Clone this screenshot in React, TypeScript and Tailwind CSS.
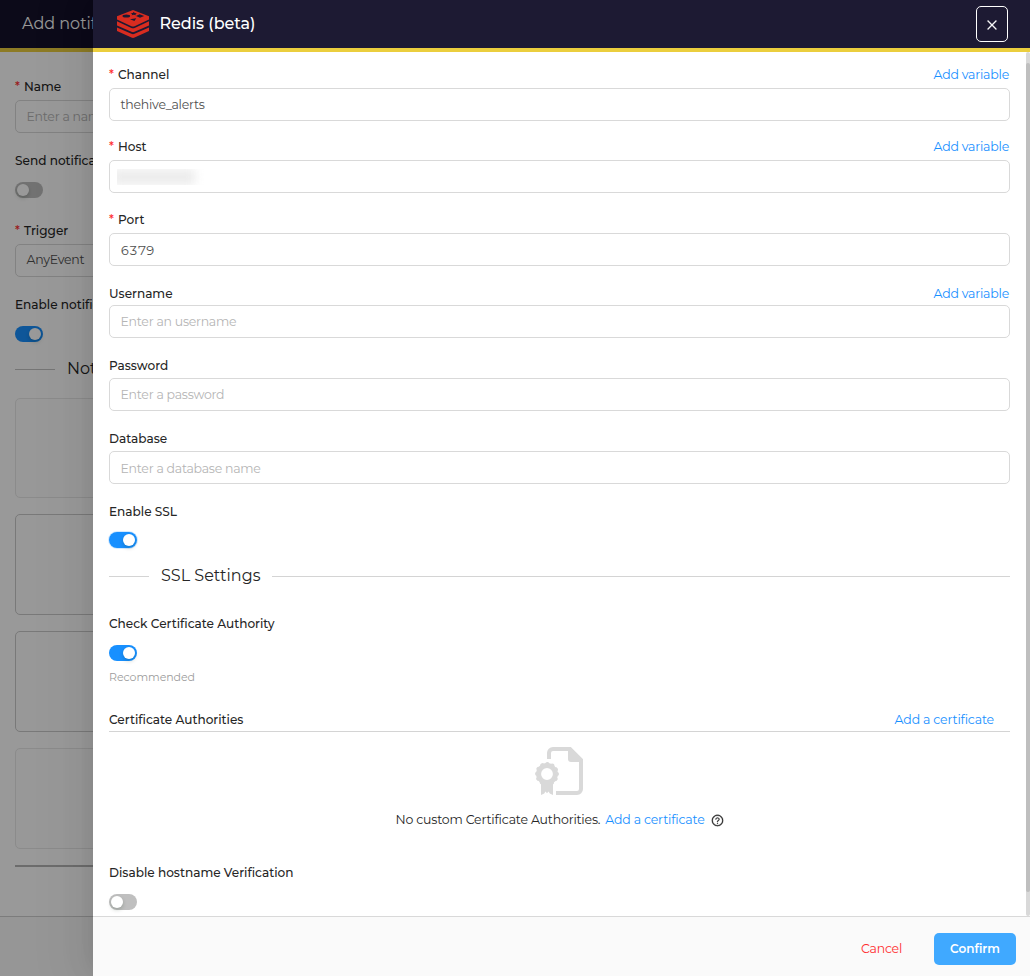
import type { ReactNode } from "react";
import { AiOutlineClose, AiOutlineQuestionCircle } from "react-icons/ai";

function RedisLogo() {
  return (
    <svg width="32" height="28" viewBox="0 0 32 28" className="shrink-0">
      <path d="M16 0 32 6.3v3.2L17.6 16.2q-1.6.8-3.2 0L0 9.5V6.3z" fill="#d82c20" />
      <path d="M0 11.3l14.4 6.6q1.6.7 3.2 0L32 11.3v4.1l-14.4 6.4q-1.6.7-3.2 0L0 15.4z" fill="#d82c20" />
      <path d="M0 17.4l14.4 6.4q1.6.7 3.2 0L32 17.4v3.7l-14.4 6.5q-1.6.7-3.2 0L0 21.1z" fill="#d82c20" />
      <ellipse cx="9.3" cy="6" rx="3.8" ry="1.5" fill="#1d1a33" />
      <path d="M16.8 1.8l.9 1.1 2.3.2-1.6.9.6 1.2-2.2-.5-2.2.6.6-1.3-1.8-.9 2.5-.2z" fill="#1d1a33" />
      <path d="M22.6 4.2l4.6 1.8-4.2 1.7-4-1.7zM13 9.2l6.3-1-1.9 2.9z" fill="#1d1a33" />
    </svg>
  );
}

function CertificateIcon() {
  return (
    <svg width="48" height="48" viewBox="0 0 48 48" fill="#d9d9d9" className="mr-px">
      <path d="M14 12V6a4 4 0 0 1 4-4h17l11 11v29a4 4 0 0 1-4 4H21" fill="none" stroke="#d9d9d9" strokeWidth="4" />
      <path d="M33 0h2l13 12.5V15H36a3 3 0 0 1-3-3z" />
      <circle cx="12" cy="27" r="8.4" fill="none" stroke="#d9d9d9" strokeWidth="5" />
      <circle cx="12" cy="27" r="10" fill="none" stroke="#d9d9d9" strokeWidth="4" strokeLinecap="round" strokeDasharray="0.1 5.136" />
      <path d="M6 35.5h12V48l-3.2-1.6-1.3-2-1.5 1.8-1.5-1.8-1.3 2L6 48z" />
    </svg>
  );
}

function Switch({ on = false, glow = false }: { on?: boolean; glow?: boolean }) {
  return (
    <div
      className={`flex h-4 w-7 items-center rounded-full p-0.5 ${on ? "justify-end bg-[#1890ff]" : "justify-start bg-[#bfbfbf]"} ${glow ? "shadow-[0_0_0_1px_#d4eaff]" : ""}`}
    >
      <div className="size-3 rounded-full bg-white shadow-[0_2px_4px_rgba(0,35,11,0.2)]" />
    </div>
  );
}

function Label({ children, required = false }: { children: ReactNode; required?: boolean }) {
  return (
    <div className="flex h-5 whitespace-nowrap text-[12.1px] leading-[22px] font-medium text-[#262626]">
      {required && <span className="w-[9px] text-[#ff2d2f]">*</span>}
      <span>{children}</span>
    </div>
  );
}

function AddVariable() {
  return <a className="mr-px text-[12.5px] leading-[21px] tracking-[-0.22px] text-[#1890ff]">Add variable</a>;
}

function Input({ children }: { children?: ReactNode }) {
  return (
    <div className="flex h-[33px] items-center whitespace-nowrap rounded-[5px] border border-[#d9d9d9] bg-white pl-[10.5px] text-[12.5px] leading-5 tracking-[-0.26px] text-[#505050]">
      {children}
    </div>
  );
}

function BackPage() {
  return (
    <div className="h-full w-[93px] overflow-hidden">
      <div className="flex h-full w-[1030px] flex-col bg-white">
        <header className="h-[52px] shrink-0 border-b-4 border-[#ebce3e] bg-[#14112a] pl-[22px]">
          <div className="whitespace-nowrap text-[16px] leading-[47px] text-white">Add notification</div>
        </header>
        <main className="flex flex-1 flex-col pl-[15px]">
          <div className="mt-[24px]">
            <Label required>Name</Label>
          </div>
          <div className="mt-1">
            <Input><span className="text-[#b5b5b5]">Enter a name</span></Input>
          </div>
          <div className="mt-[17px]">
            <Label>Send notification to every organisation</Label>
          </div>
          <div className="mt-3"><Switch /></div>
          <div className="mt-[22px]">
            <Label required>Trigger</Label>
          </div>
          <div className="mt-1">
            <Input><span className="pb-px">AnyEvent</span></Input>
          </div>
          <div className="mt-[17px]">
            <Label>Enable notification</Label>
          </div>
          <div className="mt-3"><Switch on /></div>
          <div className="mt-[15px] flex h-6 items-center gap-3">
            <div className="mt-px h-px w-10 bg-[#c4c4c4]" />
            <span className="text-[16px] text-[#262626]">Notifiers</span>
          </div>
          <div className="mt-[17px] flex flex-col gap-4">
            <div className="h-[100px] rounded-[5px] border border-[#e8e8e8] bg-[#fdfdfd]" />
            <div className="h-[101px] rounded-[5px] border border-[#cacaca] bg-[#fdfdfd]" />
            <div className="h-[101px] rounded-[5px] border border-[#cacaca] bg-[#fdfdfd]" />
            <div className="h-[101px] rounded-[5px] border border-[#e8e8e8] bg-[#fdfdfd]" />
          </div>
          <div className="mt-4 h-0.5 bg-[#b4b4b4]" />
        </main>
        <footer className="h-[60px] shrink-0 border-t border-[#cfcfcf] bg-[#fafafa]" />
      </div>
    </div>
  );
}

function Drawer() {
  return (
    <aside className="absolute inset-y-0 right-0 flex w-[937px] flex-col bg-white shadow-[-6px_0_16px_-8px_rgba(0,0,0,0.08),-9px_0_28px_rgba(0,0,0,0.05),-12px_0_48px_16px_rgba(0,0,0,0.03)]">
      <header className="flex h-[52px] shrink-0 items-center border-b-4 border-[#ebce3e] bg-[#1d1a33] pr-[22px] pl-6">
        <RedisLogo />
        <h1 className="ml-[10.5px] flex-1 pb-px text-[16px] leading-[19px] font-medium tracking-[-0.05px] text-white">Redis (beta)</h1>
        <button className="flex h-9 w-8 items-center justify-center rounded-[5px] border border-white text-white">
          <AiOutlineClose size={14} className="mt-0.5" stroke="currentColor" strokeWidth={20} />
        </button>
      </header>

      <div className="flex min-h-0 flex-1">
        <main className="flex flex-1 flex-col pl-4">
          <section className="flex flex-col pr-4">
            <div className="mt-3 flex h-6 justify-between">
              <Label required>Channel</Label>
              <AddVariable />
            </div>
            <Input>thehive_alerts</Input>
            <div className="mt-[15px] flex h-6 justify-between">
              <Label required>Host</Label>
              <AddVariable />
            </div>
            <Input>
              <div className="-ml-1 h-4 w-[100px] overflow-hidden">
                <div className="-ml-1 h-4 w-[82px] bg-[#ececec] blur-[5px]" />
              </div>
            </Input>
            <div className="mt-4 flex h-[24px] justify-between">
              <Label required>Port</Label>
            </div>
            <Input><span className="pt-0.5 tabular-nums tracking-[-0.3px]">6379</span></Input>
            <div className="mt-[17px] flex h-[22px] justify-between">
              <Label>Username</Label>
              <AddVariable />
            </div>
            <Input><span className="text-[#b5b5b5]">Enter an username</span></Input>
            <div className="mt-[17px] h-[23px]">
              <Label>Password</Label>
            </div>
            <Input><span className="text-[#b5b5b5]">Enter a password</span></Input>
            <div className="mt-[17px] h-[23px]">
              <Label>Database</Label>
            </div>
            <Input><span className="pt-0.5 text-[#b5b5b5]">Enter a database name</span></Input>
          </section>

          <section className="mt-[17px]">
            <Label>Enable SSL</Label>
            <div className="mt-[11px]"><Switch on glow /></div>
          </section>

          <div className="mt-[15px] flex h-6 items-center gap-3 pr-4">
            <div className="mt-[3px] h-px w-10 bg-[#d4d4d4]" />
            <h2 className="h-6 text-[16px] leading-[26px] text-[#262626]">SSL Settings</h2>
            <div className="mt-[3px] h-px flex-1 bg-[#d4d4d4]" />
          </div>

          <section className="mt-[26px]">
            <Label>Check Certificate Authority</Label>
            <div className="mt-[12px]"><Switch on /></div>
            <p className="mt-[6px] text-[11px] leading-5 tracking-[-0.05px] text-[#9c9c9c]">Recommended</p>
          </section>

          <section className="mt-[22px] pr-4">
            <div className="flex h-[23px] justify-between border-b border-[#d4d4d4] pr-4">
              <Label>Certificate Authorities</Label>
              <a className="text-[12.5px] leading-[21px] tracking-[-0.17px] text-[#1890ff]">Add a certificate</a>
            </div>
            <div className="flex flex-col items-center pt-[15px]">
              <CertificateIcon />
              <div className="mt-[15px] flex h-5 items-center whitespace-nowrap text-[12.5px] leading-5 tracking-[-0.18px] text-[#262626]">
                <span>No custom Certificate Authorities.</span>
                <a className="ml-[5px] text-[#1890ff]">Add a certificate</a>
                <AiOutlineQuestionCircle size={13} className="mt-px ml-[6px]" stroke="currentColor" strokeWidth={20} />
              </div>
            </div>
          </section>

          <section className="mt-[32px]">
            <Label>Disable hostname Verification</Label>
            <div className="mt-[12px]"><Switch /></div>
          </section>
        </main>
        <div className="w-1 shrink-0 rounded-[2px] bg-[#d9d9d9] pt-[11px]">
          <div className="h-[829px] rounded-[2px] bg-[#bfbfbf]" />
        </div>
      </div>

      <footer className="flex h-[60px] shrink-0 items-center justify-end border-t border-[#d9d9d9] bg-[#fafafa] pt-[5px] pr-[14px]">
        <button className="text-[12.5px] leading-5 tracking-[-0.25px] text-[#ff2d2f]">Cancel</button>
        <button className="ml-8 h-8 w-[82px] rounded-[5px] bg-[#40a9ff] text-[12px] font-semibold text-white">
          Confirm
        </button>
      </footer>
    </aside>
  );
}

export default function App() {
  return (
    <div className="relative h-[976px] w-[1030px] overflow-hidden font-['Montserrat','Inter',sans-serif]">
      <BackPage />
      <div className="absolute inset-0 bg-black/40" />
      <Drawer />
    </div>
  );
}
